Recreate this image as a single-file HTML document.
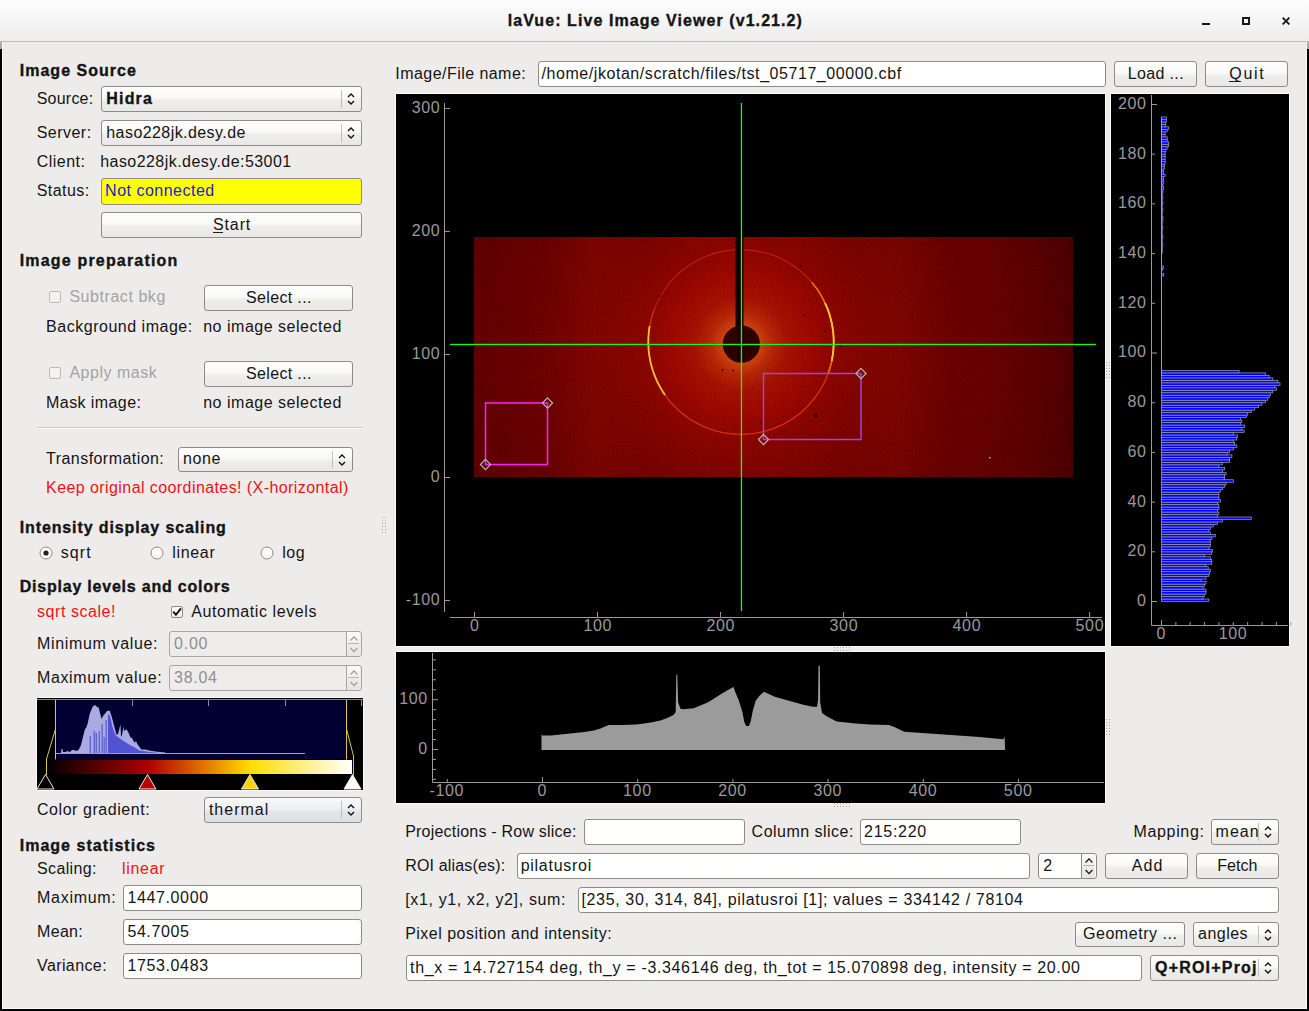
<!DOCTYPE html>
<html><head><meta charset="utf-8"><title>laVue</title>
<style>
html,body{margin:0;padding:0;}
body{width:1309px;height:1011px;position:relative;overflow:hidden;background:#edeceb;font-family:"Liberation Sans", sans-serif;}
</style></head><body>
<div style="position:absolute;left:0px;top:0px;width:1309px;height:42px;background:linear-gradient(#fdfdfd,#ececec)"></div>
<div style="position:absolute;left:0px;top:41px;width:1309px;height:1px;background:#bdbbb8"></div>
<div style="position:absolute;left:0px;top:42px;width:2px;height:969px;background:#000"></div>
<div style="position:absolute;left:0px;top:42px;width:2px;height:7px;background:#aaa8a5"></div>
<div style="position:absolute;left:1307px;top:42px;width:2px;height:969px;background:#000"></div>
<div style="position:absolute;left:1307px;top:42px;width:2px;height:7px;background:#aaa8a5"></div>
<div style="position:absolute;left:0px;top:1009px;width:1309px;height:2px;background:#000"></div>
<div style="position:absolute;left:2px;top:42px;width:1px;height:967px;background:#fdfcfb"></div>
<div style="position:absolute;left:1306px;top:42px;width:1px;height:967px;background:#fdfcfb"></div>
<div style="position:absolute;left:2px;top:1008px;width:1305px;height:1px;background:#fdfcfb"></div>
<div style="position:absolute;left:1202px;top:23px;width:8px;height:2px;background:#1a1a1a"></div>
<div style="position:absolute;left:1242px;top:17px;width:8px;height:8px;box-sizing:border-box;border:2px solid #1a1a1a"></div>
<svg style="position:absolute;left:1282px;top:17px" width="8" height="8" viewBox="0 0 8 8"><path d="M0.6 0.6 L7.4 7.4 M7.4 0.6 L0.6 7.4" stroke="#1a1a1a" stroke-width="1.9"/></svg>
<div style="position:absolute;left:101px;top:86px;width:261px;height:26px;box-sizing:border-box;border:1px solid #8f8b87;border-radius:3px;background:linear-gradient(#fefefe 0%, #f9f9f8 45%, #eeeeed 55%, #e9e8e7 100%)"></div>
<div style="position:absolute;left:341px;top:90px;width:1px;height:18px;background:#c3c0bc"></div>
<svg style="position:absolute;left:346px;top:92.0px" width="10" height="14" viewBox="0 0 10 14"><path d="M2 5.1 L5 2.1 L8 5.1 M2 8.9 L5 11.9 L8 8.9" fill="none" stroke="#111" stroke-width="1.4"/></svg>
<div style="position:absolute;left:101px;top:120px;width:261px;height:26px;box-sizing:border-box;border:1px solid #8f8b87;border-radius:3px;background:linear-gradient(#fefefe 0%, #f9f9f8 45%, #eeeeed 55%, #e9e8e7 100%)"></div>
<div style="position:absolute;left:341px;top:124px;width:1px;height:18px;background:#c3c0bc"></div>
<svg style="position:absolute;left:346px;top:126.0px" width="10" height="14" viewBox="0 0 10 14"><path d="M2 5.1 L5 2.1 L8 5.1 M2 8.9 L5 11.9 L8 8.9" fill="none" stroke="#111" stroke-width="1.4"/></svg>
<div style="position:absolute;left:101px;top:178px;width:261px;height:27px;box-sizing:border-box;border:1px solid #8f8b87;border-radius:3px;background:#ffff00"></div>
<div style="position:absolute;left:101px;top:212px;width:261px;height:26px;box-sizing:border-box;border:1px solid #8f8b87;border-radius:3px;background:linear-gradient(#fefefe 0%, #f9f9f8 45%, #eeeeed 55%, #e9e8e7 100%)"></div>
<div style="position:absolute;left:213px;top:232px;width:10px;height:1px;background:#1f1f1f"></div>
<div style="position:absolute;left:49px;top:291px;width:12px;height:12px;box-sizing:border-box;border:1px solid #bdbab6;border-radius:2px;background:#f3f2f1"></div>
<div style="position:absolute;left:204px;top:285px;width:149px;height:26px;box-sizing:border-box;border:1px solid #8f8b87;border-radius:3px;background:linear-gradient(#fefefe 0%, #f9f9f8 45%, #eeeeed 55%, #e9e8e7 100%)"></div>
<div style="position:absolute;left:49px;top:367px;width:12px;height:12px;box-sizing:border-box;border:1px solid #bdbab6;border-radius:2px;background:#f3f2f1"></div>
<div style="position:absolute;left:204px;top:361px;width:149px;height:26px;box-sizing:border-box;border:1px solid #8f8b87;border-radius:3px;background:linear-gradient(#fefefe 0%, #f9f9f8 45%, #eeeeed 55%, #e9e8e7 100%)"></div>
<div style="position:absolute;left:37px;top:427px;width:326px;height:1px;background:#cdcac6"></div>
<div style="position:absolute;left:37px;top:428px;width:326px;height:1px;background:#fbfaf9"></div>
<div style="position:absolute;left:178px;top:447px;width:175px;height:25px;box-sizing:border-box;border:1px solid #8f8b87;border-radius:3px;background:linear-gradient(#fefefe 0%, #f9f9f8 45%, #eeeeed 55%, #e9e8e7 100%)"></div>
<div style="position:absolute;left:332px;top:451px;width:1px;height:17px;background:#c3c0bc"></div>
<svg style="position:absolute;left:337px;top:452.5px" width="10" height="14" viewBox="0 0 10 14"><path d="M2 5.1 L5 2.1 L8 5.1 M2 8.9 L5 11.9 L8 8.9" fill="none" stroke="#111" stroke-width="1.4"/></svg>
<div style="position:absolute;left:382px;top:517px;width:1px;height:1px;background:#a8a5a1"></div>
<div style="position:absolute;left:382px;top:520px;width:1px;height:1px;background:#a8a5a1"></div>
<div style="position:absolute;left:382px;top:523px;width:1px;height:1px;background:#a8a5a1"></div>
<div style="position:absolute;left:382px;top:526px;width:1px;height:1px;background:#a8a5a1"></div>
<div style="position:absolute;left:382px;top:529px;width:1px;height:1px;background:#a8a5a1"></div>
<div style="position:absolute;left:382px;top:532px;width:1px;height:1px;background:#a8a5a1"></div>
<div style="position:absolute;left:385px;top:517px;width:1px;height:1px;background:#a8a5a1"></div>
<div style="position:absolute;left:385px;top:520px;width:1px;height:1px;background:#a8a5a1"></div>
<div style="position:absolute;left:385px;top:523px;width:1px;height:1px;background:#a8a5a1"></div>
<div style="position:absolute;left:385px;top:526px;width:1px;height:1px;background:#a8a5a1"></div>
<div style="position:absolute;left:385px;top:529px;width:1px;height:1px;background:#a8a5a1"></div>
<div style="position:absolute;left:385px;top:532px;width:1px;height:1px;background:#a8a5a1"></div>
<svg style="position:absolute;left:38px;top:545px" width="16" height="16" viewBox="0 0 16 16"><circle cx="8" cy="8" r="6" fill="#fdfdfd" stroke="#8f8b87" stroke-width="1"/><circle cx="8" cy="8" r="2.6" fill="#222"/></svg>
<svg style="position:absolute;left:149px;top:545px" width="16" height="16" viewBox="0 0 16 16"><circle cx="8" cy="8" r="6" fill="#fdfdfd" stroke="#8f8b87" stroke-width="1"/></svg>
<svg style="position:absolute;left:259px;top:545px" width="16" height="16" viewBox="0 0 16 16"><circle cx="8" cy="8" r="6" fill="#fdfdfd" stroke="#8f8b87" stroke-width="1"/></svg>
<div style="position:absolute;left:171px;top:606px;width:12px;height:12px;box-sizing:border-box;border:1px solid #8f8b87;border-radius:2px;background:linear-gradient(#ffffff,#f0efee)"></div>
<svg style="position:absolute;left:171px;top:606px" width="12" height="12" viewBox="0 0 12 12"><path d="M2.3 5.6 L4.9 8.8 L10 2.4" fill="none" stroke="#111" stroke-width="1.9"/></svg>
<div style="position:absolute;left:169px;top:631px;width:193px;height:26px;box-sizing:border-box;border:1px solid #a9a6a2;border-radius:3px;background:#eeedec"></div>
<div style="position:absolute;left:347px;top:632px;width:13px;height:11px;border-radius:0 2px 0 0;background:linear-gradient(#fbfbfb,#f1f0ef)"></div>
<div style="position:absolute;left:347px;top:644px;width:13px;height:12px;border-radius:0 0 2px 0;background:linear-gradient(#eeeded,#e6e5e4)"></div>
<div style="position:absolute;left:346px;top:632px;width:1px;height:24px;background:#a9a6a2"></div>
<div style="position:absolute;left:348px;top:643px;width:11px;height:1px;background:#b8b4b0"></div>
<svg style="position:absolute;left:349px;top:631px" width="10" height="26" viewBox="0 0 10 26"><path d="M1.6 9.5 L5 5.9 L8.4 9.5 M1.6 17.0 L5 20.6 L8.4 17.0" fill="none" stroke="#a19e9a" stroke-width="1.3"/></svg>
<div style="position:absolute;left:169px;top:665px;width:193px;height:26px;box-sizing:border-box;border:1px solid #a9a6a2;border-radius:3px;background:#eeedec"></div>
<div style="position:absolute;left:347px;top:666px;width:13px;height:11px;border-radius:0 2px 0 0;background:linear-gradient(#fbfbfb,#f1f0ef)"></div>
<div style="position:absolute;left:347px;top:678px;width:13px;height:12px;border-radius:0 0 2px 0;background:linear-gradient(#eeeded,#e6e5e4)"></div>
<div style="position:absolute;left:346px;top:666px;width:1px;height:24px;background:#a9a6a2"></div>
<div style="position:absolute;left:348px;top:677px;width:11px;height:1px;background:#b8b4b0"></div>
<svg style="position:absolute;left:349px;top:665px" width="10" height="26" viewBox="0 0 10 26"><path d="M1.6 9.5 L5 5.9 L8.4 9.5 M1.6 17.0 L5 20.6 L8.4 17.0" fill="none" stroke="#a19e9a" stroke-width="1.3"/></svg>
<div style="position:absolute;left:204px;top:797px;width:158px;height:26px;box-sizing:border-box;border:1px solid #8f8b87;border-radius:3px;background:linear-gradient(#f7f8fa 0%, #eef0f4 45%, #e2e5ea 55%, #dcdfe5 100%)"></div>
<div style="position:absolute;left:341px;top:801px;width:1px;height:18px;background:#c3c0bc"></div>
<svg style="position:absolute;left:346px;top:803.0px" width="10" height="14" viewBox="0 0 10 14"><path d="M2 5.1 L5 2.1 L8 5.1 M2 8.9 L5 11.9 L8 8.9" fill="none" stroke="#111" stroke-width="1.4"/></svg>
<div style="position:absolute;left:123px;top:885px;width:239px;height:26px;box-sizing:border-box;border:1px solid #8f8b87;border-radius:3px;background:#ffffff"></div>
<div style="position:absolute;left:123px;top:919px;width:239px;height:26px;box-sizing:border-box;border:1px solid #8f8b87;border-radius:3px;background:#ffffff"></div>
<div style="position:absolute;left:123px;top:953px;width:239px;height:26px;box-sizing:border-box;border:1px solid #8f8b87;border-radius:3px;background:#ffffff"></div>
<div style="position:absolute;left:538px;top:61px;width:568px;height:26px;box-sizing:border-box;border:1px solid #8f8b87;border-radius:3px;background:#ffffff"></div>
<div style="position:absolute;left:1114px;top:61px;width:83px;height:26px;box-sizing:border-box;border:1px solid #8f8b87;border-radius:3px;background:linear-gradient(#fefefe 0%, #f9f9f8 45%, #eeeeed 55%, #e9e8e7 100%)"></div>
<div style="position:absolute;left:1205px;top:61px;width:83px;height:26px;box-sizing:border-box;border:1px solid #8f8b87;border-radius:3px;background:linear-gradient(#fefefe 0%, #f9f9f8 45%, #eeeeed 55%, #e9e8e7 100%)"></div>
<div style="position:absolute;left:1229px;top:81px;width:12px;height:1px;background:#1f1f1f"></div>
<div style="position:absolute;left:584px;top:819px;width:161px;height:26px;box-sizing:border-box;border:1px solid #8f8b87;border-radius:3px;background:#ffffff"></div>
<div style="position:absolute;left:860px;top:819px;width:161px;height:26px;box-sizing:border-box;border:1px solid #8f8b87;border-radius:3px;background:#ffffff"></div>
<div style="position:absolute;left:1211px;top:819px;width:68px;height:26px;box-sizing:border-box;border:1px solid #8f8b87;border-radius:3px;background:linear-gradient(#fefefe 0%, #f9f9f8 45%, #eeeeed 55%, #e9e8e7 100%)"></div>
<div style="position:absolute;left:1258px;top:823px;width:1px;height:18px;background:#c3c0bc"></div>
<svg style="position:absolute;left:1263px;top:825.0px" width="10" height="14" viewBox="0 0 10 14"><path d="M2 5.1 L5 2.1 L8 5.1 M2 8.9 L5 11.9 L8 8.9" fill="none" stroke="#111" stroke-width="1.4"/></svg>
<div style="position:absolute;left:517px;top:853px;width:513px;height:26px;box-sizing:border-box;border:1px solid #8f8b87;border-radius:3px;background:#ffffff"></div>
<div style="position:absolute;left:1038px;top:853px;width:59px;height:26px;box-sizing:border-box;border:1px solid #8f8b87;border-radius:3px;background:#ffffff"></div>
<div style="position:absolute;left:1082px;top:854px;width:13px;height:11px;border-radius:0 2px 0 0;background:linear-gradient(#fbfbfb,#f1f0ef)"></div>
<div style="position:absolute;left:1082px;top:866px;width:13px;height:12px;border-radius:0 0 2px 0;background:linear-gradient(#eeeded,#e6e5e4)"></div>
<div style="position:absolute;left:1081px;top:854px;width:1px;height:24px;background:#8f8b87"></div>
<div style="position:absolute;left:1083px;top:865px;width:11px;height:1px;background:#b8b4b0"></div>
<svg style="position:absolute;left:1084px;top:853px" width="10" height="26" viewBox="0 0 10 26"><path d="M1.6 9.5 L5 5.9 L8.4 9.5 M1.6 17.0 L5 20.6 L8.4 17.0" fill="none" stroke="#111" stroke-width="1.3"/></svg>
<div style="position:absolute;left:1105px;top:853px;width:83px;height:26px;box-sizing:border-box;border:1px solid #8f8b87;border-radius:3px;background:linear-gradient(#fefefe 0%, #f9f9f8 45%, #eeeeed 55%, #e9e8e7 100%)"></div>
<div style="position:absolute;left:1196px;top:853px;width:83px;height:26px;box-sizing:border-box;border:1px solid #8f8b87;border-radius:3px;background:linear-gradient(#fefefe 0%, #f9f9f8 45%, #eeeeed 55%, #e9e8e7 100%)"></div>
<div style="position:absolute;left:578px;top:887px;width:701px;height:26px;box-sizing:border-box;border:1px solid #8f8b87;border-radius:3px;background:#ffffff"></div>
<div style="position:absolute;left:1075px;top:922px;width:110px;height:25px;box-sizing:border-box;border:1px solid #8f8b87;border-radius:3px;background:linear-gradient(#fefefe 0%, #f9f9f8 45%, #eeeeed 55%, #e9e8e7 100%)"></div>
<div style="position:absolute;left:1193px;top:922px;width:86px;height:25px;box-sizing:border-box;border:1px solid #8f8b87;border-radius:3px;background:linear-gradient(#fefefe 0%, #f9f9f8 45%, #eeeeed 55%, #e9e8e7 100%)"></div>
<div style="position:absolute;left:1258px;top:926px;width:1px;height:17px;background:#c3c0bc"></div>
<svg style="position:absolute;left:1263px;top:927.5px" width="10" height="14" viewBox="0 0 10 14"><path d="M2 5.1 L5 2.1 L8 5.1 M2 8.9 L5 11.9 L8 8.9" fill="none" stroke="#111" stroke-width="1.4"/></svg>
<div style="position:absolute;left:406px;top:955px;width:736px;height:26px;box-sizing:border-box;border:1px solid #8f8b87;border-radius:3px;background:#ffffff"></div>
<div style="position:absolute;left:1150px;top:955px;width:129px;height:26px;box-sizing:border-box;border:1px solid #8f8b87;border-radius:3px;background:linear-gradient(#fefefe 0%, #f9f9f8 45%, #eeeeed 55%, #e9e8e7 100%)"></div>
<div style="position:absolute;left:1258px;top:959px;width:1px;height:18px;background:#c3c0bc"></div>
<svg style="position:absolute;left:1263px;top:961.0px" width="10" height="14" viewBox="0 0 10 14"><path d="M2 5.1 L5 2.1 L8 5.1 M2 8.9 L5 11.9 L8 8.9" fill="none" stroke="#111" stroke-width="1.4"/></svg>
<div style="position:absolute;left:395px;top:93px;width:711px;height:554px;background:#fcfbfa"></div>
<div style="position:absolute;left:396px;top:94px;width:709px;height:552px;background:#000"></div>
<div style="position:absolute;left:1110px;top:93px;width:180px;height:554px;background:#fcfbfa"></div>
<div style="position:absolute;left:1111px;top:94px;width:178px;height:552px;background:#000"></div>
<div style="position:absolute;left:395px;top:651px;width:711px;height:153px;background:#fcfbfa"></div>
<div style="position:absolute;left:396px;top:652px;width:709px;height:151px;background:#000"></div>
<svg style="position:absolute;left:0;top:0" width="1309" height="1011" viewBox="0 0 1309 1011" font-family="Liberation Sans, sans-serif"><defs><radialGradient id="glow" gradientUnits="userSpaceOnUse" cx="741" cy="344" r="360"><stop offset="0" stop-color="#dc4c14"/><stop offset="0.055" stop-color="#d04210"/><stop offset="0.085" stop-color="#bc2808"/><stop offset="0.13" stop-color="#aa1202"/><stop offset="0.2" stop-color="#a00800"/><stop offset="0.26" stop-color="#900600"/><stop offset="0.4" stop-color="#7c0400"/><stop offset="0.6" stop-color="#6c0200"/><stop offset="0.8" stop-color="#600000"/><stop offset="1" stop-color="#560000"/></radialGradient><linearGradient id="bands" gradientUnits="userSpaceOnUse" x1="474" x2="1073" y1="0" y2="0"><stop offset="0" stop-color="#ff2000" stop-opacity="0"/><stop offset="0.12" stop-color="#ff2000" stop-opacity="0"/><stop offset="0.2" stop-color="#ff2000" stop-opacity="0.07"/><stop offset="0.28" stop-color="#ff2000" stop-opacity="0"/><stop offset="0.62" stop-color="#ff2000" stop-opacity="0"/><stop offset="0.71" stop-color="#ff2000" stop-opacity="0.06"/><stop offset="0.8" stop-color="#ff2000" stop-opacity="0"/><stop offset="1" stop-color="#000" stop-opacity="0.12"/></linearGradient><linearGradient id="arm" x1="0" x2="1" y1="0" y2="0"><stop offset="0" stop-color="#2a0300"/><stop offset="0.4" stop-color="#080000"/><stop offset="1" stop-color="#1a0100"/></linearGradient><filter id="noise" x="0" y="0" width="100%" height="100%"><feTurbulence type="fractalNoise" baseFrequency="0.9" numOctaves="1" seed="4" result="t"/><feColorMatrix in="t" type="matrix" values="0 0 0 0 0  0 0 0 0 0  0 0 0 0 0  0 0 0 -2.2 1.25"/></filter></defs><rect x="474" y="237" width="599" height="240" fill="url(#glow)"/><rect x="474" y="237" width="599" height="240" fill="url(#bands)"/><rect x="474" y="237" width="599" height="240" filter="url(#noise)" opacity="0.22"/><ellipse cx="741.0" cy="342.0" rx="92.7" ry="92.4" fill="none" stroke="#c42004" stroke-width="1.1"/><polyline points="828.1,373.6 825.4,380.3 822.1,386.8 818.3,393.0 814.0,398.9 809.3,404.4 804.2,409.6 798.7,414.3 792.8,418.6 786.6,422.4 780.2,425.7 773.5,428.5 766.6,430.8 759.5,432.5 752.3,433.7 745.0,434.3 737.8,434.3 730.5,433.8 723.3,432.7 716.2,431.0 709.3,428.8 702.6,426.1 696.1,422.8 689.8,419.1 683.9,414.8 678.4,410.1 673.2,405.0 668.5,399.5 664.1,393.7 660.3,387.5 657.0,381.0 654.2,374.4 651.9,367.5 650.2,360.4 649.0,353.3 648.4,346.0 648.4,338.8 648.9,331.5 650.0,324.4 651.7,317.3 653.9,310.4" fill="none" stroke="#d83008" stroke-width="1.1"/><polyline points="665.1,395.0 664.0,393.5 663.0,392.0 662.1,390.5 661.1,388.9 660.2,387.3 659.3,385.7 658.5,384.1 657.7,382.5 656.9,380.9 656.2,379.2 655.4,377.5 654.8,375.9 654.1,374.2 653.5,372.5 652.9,370.7 652.4,369.0 651.8,367.3 651.4,365.5 650.9,363.8 650.5,362.0 650.1,360.2 649.8,358.4 649.5,356.7 649.2,354.9 649.0,353.1 648.8,351.3 648.6,349.5 648.5,347.6 648.4,345.8 648.3,344.0 648.3,342.2 648.3,340.4 648.4,338.6 648.4,336.8 648.6,335.0 648.7,333.1 648.9,331.3 649.1,329.5 649.4,327.7 649.7,326.0" fill="none" stroke="#ffc030" stroke-width="1.8"/><polyline points="812.0,282.6 813.5,284.5 815.0,286.4 816.5,288.3 817.9,290.3 819.2,292.4 820.5,294.4 821.7,296.5 822.8,298.6 824.0,300.8 825.0,303.0 826.0,305.2 826.9,307.4 827.8,309.6 828.6,311.9 829.4,314.2 830.1,316.5 830.7,318.9 831.3,321.2 831.8,323.6 832.3,326.0 832.7,328.3 833.0,330.7 833.3,333.1 833.5,335.6 833.6,338.0 833.7,340.4 833.7,342.8 833.6,345.2 833.5,347.6 833.3,350.1 833.1,352.5 832.8,354.9 832.4,357.3 832.0,359.6 831.5,362.0 830.9,364.4 830.3,366.7 829.6,369.0 828.9,371.3 828.1,373.6" fill="none" stroke="#f07010" stroke-width="1.6"/><polyline points="825.0,303.0 825.6,304.3 826.2,305.7 826.8,307.1 827.4,308.4 827.9,309.8 828.4,311.2 828.9,312.6 829.4,314.1 829.8,315.5 830.2,316.9 830.6,318.4 831.0,319.8 831.3,321.3 831.7,322.7 832.0,324.2 832.2,325.6 832.5,327.1 832.7,328.6 832.9,330.1 833.1,331.5 833.3,333.0 833.4,334.5 833.5,336.0 833.6,337.5 833.7,339.0 833.7,340.5 833.7,342.0 833.7,343.5 833.7,344.9 833.6,346.4 833.5,347.9 833.4,349.4 833.3,350.9 833.1,352.4 832.9,353.9 832.7,355.3 832.5,356.8 832.2,358.3 832.0,359.7 831.7,361.2" fill="none" stroke="#ffc838" stroke-width="1.8"/><rect x="799.5" y="265.0" width="2" height="2" fill="#100000"/><rect x="802.85" y="314.25" width="1.5" height="1.5" fill="#100000"/><rect x="824.65" y="330.75" width="1.5" height="1.5" fill="#100000"/><rect x="839.65" y="345.25" width="1.5" height="1.5" fill="#100000"/><rect x="721.75" y="369.25" width="1.5" height="1.5" fill="#100000"/><rect x="732.55" y="369.85" width="1.5" height="1.5" fill="#100000"/><rect x="814.2" y="414.2" width="3" height="3" fill="#100000"/><rect x="760.65" y="421.75" width="1.5" height="1.5" fill="#100000"/><rect x="658.75" y="295.25" width="1.5" height="1.5" fill="#100000"/><rect x="987.25" y="456.25" width="1.5" height="1.5" fill="#100000"/><rect x="989" y="457" width="1.5" height="1.5" fill="#ffa020"/><rect x="735.5" y="237" width="8" height="100" fill="url(#arm)"/><circle cx="741.4" cy="344.2" r="18.6" fill="#2c0100"/><rect x="737" y="326" width="7" height="36" fill="#180000" opacity="0.6"/><rect x="740.8" y="103" width="1.3" height="508" fill="#12ff12"/><rect x="450" y="343.8" width="646" height="1.3" fill="#12ff12"/><rect x="485.5" y="403" width="62" height="61.5" fill="none" stroke="#ff20ff" stroke-width="1.5"/><rect x="763.5" y="373.5" width="97.5" height="66" fill="none" stroke="#9848d8" stroke-width="1.5"/><path d="M485.5 459.4 L490.6 464.5 L485.5 469.6 L480.4 464.5 Z" fill="none" stroke="#b0c0b8" stroke-width="1.1"/><path d="M547.5 397.9 L552.6 403 L547.5 408.1 L542.4 403 Z" fill="none" stroke="#b0c0b8" stroke-width="1.1"/><path d="M763.5 434.4 L768.6 439.5 L763.5 444.6 L758.4 439.5 Z" fill="none" stroke="#b0c0b8" stroke-width="1.1"/><path d="M861 368.4 L866.1 373.5 L861 378.6 L855.9 373.5 Z" fill="none" stroke="#b0c0b8" stroke-width="1.1"/><line x1="444.5" y1="103" x2="444.5" y2="612" stroke="#9a9a9a" stroke-width="1"/><line x1="444.5" y1="108.41000000000003" x2="450" y2="108.41000000000003" stroke="#9a9a9a" stroke-width="1"/><text x="440.34999999999997" y="112.81000000000003" text-anchor="end" font-size="16" fill="#9a9a9a" letter-spacing="0.65">300</text><line x1="444.5" y1="231.44" x2="450" y2="231.44" stroke="#9a9a9a" stroke-width="1"/><text x="440.34999999999997" y="235.84" text-anchor="end" font-size="16" fill="#9a9a9a" letter-spacing="0.65">200</text><line x1="444.5" y1="354.47" x2="450" y2="354.47" stroke="#9a9a9a" stroke-width="1"/><text x="440.34999999999997" y="358.87" text-anchor="end" font-size="16" fill="#9a9a9a" letter-spacing="0.65">100</text><line x1="444.5" y1="477.5" x2="450" y2="477.5" stroke="#9a9a9a" stroke-width="1"/><text x="440.34999999999997" y="481.9" text-anchor="end" font-size="16" fill="#9a9a9a" letter-spacing="0.65">0</text><line x1="444.5" y1="600.53" x2="450" y2="600.53" stroke="#9a9a9a" stroke-width="1"/><text x="440.34999999999997" y="604.93" text-anchor="end" font-size="16" fill="#9a9a9a" letter-spacing="0.65">-100</text><line x1="450" y1="617.5" x2="1102" y2="617.5" stroke="#9a9a9a" stroke-width="1"/><line x1="474.5" y1="612" x2="474.5" y2="617.5" stroke="#9a9a9a" stroke-width="1"/><text x="474.8" y="631" text-anchor="middle" font-size="16" fill="#9a9a9a" letter-spacing="0.65">0</text><line x1="597.52" y1="612" x2="597.52" y2="617.5" stroke="#9a9a9a" stroke-width="1"/><text x="597.8199999999999" y="631" text-anchor="middle" font-size="16" fill="#9a9a9a" letter-spacing="0.65">100</text><line x1="720.54" y1="612" x2="720.54" y2="617.5" stroke="#9a9a9a" stroke-width="1"/><text x="720.8399999999999" y="631" text-anchor="middle" font-size="16" fill="#9a9a9a" letter-spacing="0.65">200</text><line x1="843.56" y1="612" x2="843.56" y2="617.5" stroke="#9a9a9a" stroke-width="1"/><text x="843.8599999999999" y="631" text-anchor="middle" font-size="16" fill="#9a9a9a" letter-spacing="0.65">300</text><line x1="966.5799999999999" y1="612" x2="966.5799999999999" y2="617.5" stroke="#9a9a9a" stroke-width="1"/><text x="966.8799999999999" y="631" text-anchor="middle" font-size="16" fill="#9a9a9a" letter-spacing="0.65">400</text><line x1="1089.6" y1="612" x2="1089.6" y2="617.5" stroke="#9a9a9a" stroke-width="1"/><text x="1089.8999999999999" y="631" text-anchor="middle" font-size="16" fill="#9a9a9a" letter-spacing="0.65">500</text><rect x="1161.5" y="599.01" width="47.4" height="2.485" fill="#0000ff" stroke="#a0a0a0" stroke-width="0.7"/><rect x="1161.5" y="596.53" width="41.6" height="2.485" fill="#0000ff" stroke="#a0a0a0" stroke-width="0.7"/><rect x="1161.5" y="594.04" width="43.1" height="2.485" fill="#0000ff" stroke="#a0a0a0" stroke-width="0.7"/><rect x="1161.5" y="591.56" width="44.5" height="2.485" fill="#0000ff" stroke="#a0a0a0" stroke-width="0.7"/><rect x="1161.5" y="589.08" width="44.5" height="2.485" fill="#0000ff" stroke="#a0a0a0" stroke-width="0.7"/><rect x="1161.5" y="586.59" width="41.6" height="2.485" fill="#0000ff" stroke="#a0a0a0" stroke-width="0.7"/><rect x="1161.5" y="584.11" width="43.1" height="2.485" fill="#0000ff" stroke="#a0a0a0" stroke-width="0.7"/><rect x="1161.5" y="581.62" width="44.5" height="2.485" fill="#0000ff" stroke="#a0a0a0" stroke-width="0.7"/><rect x="1161.5" y="579.13" width="39.5" height="2.485" fill="#0000ff" stroke="#a0a0a0" stroke-width="0.7"/><rect x="1161.5" y="576.65" width="44.5" height="2.485" fill="#0000ff" stroke="#a0a0a0" stroke-width="0.7"/><rect x="1161.5" y="574.16" width="47.4" height="2.485" fill="#0000ff" stroke="#a0a0a0" stroke-width="0.7"/><rect x="1161.5" y="571.68" width="48.1" height="2.485" fill="#0000ff" stroke="#a0a0a0" stroke-width="0.7"/><rect x="1161.5" y="569.20" width="48.8" height="2.485" fill="#0000ff" stroke="#a0a0a0" stroke-width="0.7"/><rect x="1161.5" y="566.71" width="46.7" height="2.485" fill="#0000ff" stroke="#a0a0a0" stroke-width="0.7"/><rect x="1161.5" y="564.23" width="44.5" height="2.485" fill="#0000ff" stroke="#a0a0a0" stroke-width="0.7"/><rect x="1161.5" y="561.74" width="50.3" height="2.485" fill="#0000ff" stroke="#a0a0a0" stroke-width="0.7"/><rect x="1161.5" y="559.25" width="50.3" height="2.485" fill="#0000ff" stroke="#a0a0a0" stroke-width="0.7"/><rect x="1161.5" y="556.77" width="48.8" height="2.485" fill="#0000ff" stroke="#a0a0a0" stroke-width="0.7"/><rect x="1161.5" y="554.28" width="43.1" height="2.485" fill="#0000ff" stroke="#a0a0a0" stroke-width="0.7"/><rect x="1161.5" y="551.80" width="50.3" height="2.485" fill="#0000ff" stroke="#a0a0a0" stroke-width="0.7"/><rect x="1161.5" y="549.32" width="51.0" height="2.485" fill="#0000ff" stroke="#a0a0a0" stroke-width="0.7"/><rect x="1161.5" y="546.83" width="47.4" height="2.485" fill="#0000ff" stroke="#a0a0a0" stroke-width="0.7"/><rect x="1161.5" y="544.35" width="48.8" height="2.485" fill="#0000ff" stroke="#a0a0a0" stroke-width="0.7"/><rect x="1161.5" y="541.86" width="48.8" height="2.485" fill="#0000ff" stroke="#a0a0a0" stroke-width="0.7"/><rect x="1161.5" y="539.38" width="48.8" height="2.485" fill="#0000ff" stroke="#a0a0a0" stroke-width="0.7"/><rect x="1161.5" y="536.89" width="50.3" height="2.485" fill="#0000ff" stroke="#a0a0a0" stroke-width="0.7"/><rect x="1161.5" y="534.40" width="53.8" height="2.485" fill="#0000ff" stroke="#a0a0a0" stroke-width="0.7"/><rect x="1161.5" y="531.92" width="48.8" height="2.485" fill="#0000ff" stroke="#a0a0a0" stroke-width="0.7"/><rect x="1161.5" y="529.43" width="47.4" height="2.485" fill="#0000ff" stroke="#a0a0a0" stroke-width="0.7"/><rect x="1161.5" y="526.95" width="48.8" height="2.485" fill="#0000ff" stroke="#a0a0a0" stroke-width="0.7"/><rect x="1161.5" y="524.47" width="51.7" height="2.485" fill="#0000ff" stroke="#a0a0a0" stroke-width="0.7"/><rect x="1161.5" y="521.98" width="56.0" height="2.485" fill="#0000ff" stroke="#a0a0a0" stroke-width="0.7"/><rect x="1161.5" y="519.50" width="61.0" height="2.485" fill="#0000ff" stroke="#a0a0a0" stroke-width="0.7"/><rect x="1161.5" y="517.01" width="89.8" height="2.485" fill="#0000ff" stroke="#a0a0a0" stroke-width="0.7"/><rect x="1161.5" y="514.52" width="56.0" height="2.485" fill="#0000ff" stroke="#a0a0a0" stroke-width="0.7"/><rect x="1161.5" y="512.04" width="57.4" height="2.485" fill="#0000ff" stroke="#a0a0a0" stroke-width="0.7"/><rect x="1161.5" y="509.56" width="56.0" height="2.485" fill="#0000ff" stroke="#a0a0a0" stroke-width="0.7"/><rect x="1161.5" y="507.07" width="57.4" height="2.485" fill="#0000ff" stroke="#a0a0a0" stroke-width="0.7"/><rect x="1161.5" y="504.59" width="57.4" height="2.485" fill="#0000ff" stroke="#a0a0a0" stroke-width="0.7"/><rect x="1161.5" y="502.10" width="56.0" height="2.485" fill="#0000ff" stroke="#a0a0a0" stroke-width="0.7"/><rect x="1161.5" y="499.62" width="58.9" height="2.485" fill="#0000ff" stroke="#a0a0a0" stroke-width="0.7"/><rect x="1161.5" y="497.13" width="57.4" height="2.485" fill="#0000ff" stroke="#a0a0a0" stroke-width="0.7"/><rect x="1161.5" y="494.64" width="57.4" height="2.485" fill="#0000ff" stroke="#a0a0a0" stroke-width="0.7"/><rect x="1161.5" y="492.16" width="57.4" height="2.485" fill="#0000ff" stroke="#a0a0a0" stroke-width="0.7"/><rect x="1161.5" y="489.68" width="58.9" height="2.485" fill="#0000ff" stroke="#a0a0a0" stroke-width="0.7"/><rect x="1161.5" y="487.19" width="61.0" height="2.485" fill="#0000ff" stroke="#a0a0a0" stroke-width="0.7"/><rect x="1161.5" y="484.71" width="63.2" height="2.485" fill="#0000ff" stroke="#a0a0a0" stroke-width="0.7"/><rect x="1161.5" y="482.22" width="64.6" height="2.485" fill="#0000ff" stroke="#a0a0a0" stroke-width="0.7"/><rect x="1161.5" y="479.74" width="71.8" height="2.485" fill="#0000ff" stroke="#a0a0a0" stroke-width="0.7"/><rect x="1161.5" y="477.25" width="63.2" height="2.485" fill="#0000ff" stroke="#a0a0a0" stroke-width="0.7"/><rect x="1161.5" y="474.76" width="63.2" height="2.485" fill="#0000ff" stroke="#a0a0a0" stroke-width="0.7"/><rect x="1161.5" y="472.28" width="64.6" height="2.485" fill="#0000ff" stroke="#a0a0a0" stroke-width="0.7"/><rect x="1161.5" y="469.80" width="61.0" height="2.485" fill="#0000ff" stroke="#a0a0a0" stroke-width="0.7"/><rect x="1161.5" y="467.31" width="63.2" height="2.485" fill="#0000ff" stroke="#a0a0a0" stroke-width="0.7"/><rect x="1161.5" y="464.83" width="57.4" height="2.485" fill="#0000ff" stroke="#a0a0a0" stroke-width="0.7"/><rect x="1161.5" y="462.34" width="61.0" height="2.485" fill="#0000ff" stroke="#a0a0a0" stroke-width="0.7"/><rect x="1161.5" y="459.86" width="68.2" height="2.485" fill="#0000ff" stroke="#a0a0a0" stroke-width="0.7"/><rect x="1161.5" y="457.37" width="68.2" height="2.485" fill="#0000ff" stroke="#a0a0a0" stroke-width="0.7"/><rect x="1161.5" y="454.88" width="70.4" height="2.485" fill="#0000ff" stroke="#a0a0a0" stroke-width="0.7"/><rect x="1161.5" y="452.40" width="66.1" height="2.485" fill="#0000ff" stroke="#a0a0a0" stroke-width="0.7"/><rect x="1161.5" y="449.92" width="68.2" height="2.485" fill="#0000ff" stroke="#a0a0a0" stroke-width="0.7"/><rect x="1161.5" y="447.43" width="71.8" height="2.485" fill="#0000ff" stroke="#a0a0a0" stroke-width="0.7"/><rect x="1161.5" y="444.95" width="75.4" height="2.485" fill="#0000ff" stroke="#a0a0a0" stroke-width="0.7"/><rect x="1161.5" y="442.46" width="73.2" height="2.485" fill="#0000ff" stroke="#a0a0a0" stroke-width="0.7"/><rect x="1161.5" y="439.98" width="71.8" height="2.485" fill="#0000ff" stroke="#a0a0a0" stroke-width="0.7"/><rect x="1161.5" y="437.49" width="75.4" height="2.485" fill="#0000ff" stroke="#a0a0a0" stroke-width="0.7"/><rect x="1161.5" y="435.00" width="76.1" height="2.485" fill="#0000ff" stroke="#a0a0a0" stroke-width="0.7"/><rect x="1161.5" y="432.52" width="71.8" height="2.485" fill="#0000ff" stroke="#a0a0a0" stroke-width="0.7"/><rect x="1161.5" y="430.03" width="82.6" height="2.485" fill="#0000ff" stroke="#a0a0a0" stroke-width="0.7"/><rect x="1161.5" y="427.55" width="80.4" height="2.485" fill="#0000ff" stroke="#a0a0a0" stroke-width="0.7"/><rect x="1161.5" y="425.06" width="83.3" height="2.485" fill="#0000ff" stroke="#a0a0a0" stroke-width="0.7"/><rect x="1161.5" y="422.58" width="79.0" height="2.485" fill="#0000ff" stroke="#a0a0a0" stroke-width="0.7"/><rect x="1161.5" y="420.10" width="80.4" height="2.485" fill="#0000ff" stroke="#a0a0a0" stroke-width="0.7"/><rect x="1161.5" y="417.61" width="79.0" height="2.485" fill="#0000ff" stroke="#a0a0a0" stroke-width="0.7"/><rect x="1161.5" y="415.12" width="84.7" height="2.485" fill="#0000ff" stroke="#a0a0a0" stroke-width="0.7"/><rect x="1161.5" y="412.64" width="86.2" height="2.485" fill="#0000ff" stroke="#a0a0a0" stroke-width="0.7"/><rect x="1161.5" y="410.15" width="89.8" height="2.485" fill="#0000ff" stroke="#a0a0a0" stroke-width="0.7"/><rect x="1161.5" y="407.67" width="93.3" height="2.485" fill="#0000ff" stroke="#a0a0a0" stroke-width="0.7"/><rect x="1161.5" y="405.19" width="96.9" height="2.485" fill="#0000ff" stroke="#a0a0a0" stroke-width="0.7"/><rect x="1161.5" y="402.70" width="100.5" height="2.485" fill="#0000ff" stroke="#a0a0a0" stroke-width="0.7"/><rect x="1161.5" y="400.22" width="104.1" height="2.485" fill="#0000ff" stroke="#a0a0a0" stroke-width="0.7"/><rect x="1161.5" y="397.73" width="106.3" height="2.485" fill="#0000ff" stroke="#a0a0a0" stroke-width="0.7"/><rect x="1161.5" y="395.25" width="107.7" height="2.485" fill="#0000ff" stroke="#a0a0a0" stroke-width="0.7"/><rect x="1161.5" y="392.76" width="109.1" height="2.485" fill="#0000ff" stroke="#a0a0a0" stroke-width="0.7"/><rect x="1161.5" y="390.27" width="111.3" height="2.485" fill="#0000ff" stroke="#a0a0a0" stroke-width="0.7"/><rect x="1161.5" y="387.79" width="114.9" height="2.485" fill="#0000ff" stroke="#a0a0a0" stroke-width="0.7"/><rect x="1161.5" y="385.31" width="113.4" height="2.485" fill="#0000ff" stroke="#a0a0a0" stroke-width="0.7"/><rect x="1161.5" y="382.82" width="118.5" height="2.485" fill="#0000ff" stroke="#a0a0a0" stroke-width="0.7"/><rect x="1161.5" y="380.34" width="116.3" height="2.485" fill="#0000ff" stroke="#a0a0a0" stroke-width="0.7"/><rect x="1161.5" y="377.85" width="111.3" height="2.485" fill="#0000ff" stroke="#a0a0a0" stroke-width="0.7"/><rect x="1161.5" y="375.37" width="107.7" height="2.485" fill="#0000ff" stroke="#a0a0a0" stroke-width="0.7"/><rect x="1161.5" y="372.88" width="104.1" height="2.485" fill="#0000ff" stroke="#a0a0a0" stroke-width="0.7"/><rect x="1161.5" y="370.39" width="77.5" height="2.485" fill="#0000ff" stroke="#a0a0a0" stroke-width="0.7"/><rect x="1161.5" y="273.48" width="2.2" height="2.485" fill="#0000ff" stroke="#a0a0a0" stroke-width="0.7"/><rect x="1161.5" y="268.51" width="0.7" height="2.485" fill="#0000ff" stroke="#a0a0a0" stroke-width="0.7"/><rect x="1161.5" y="266.03" width="2.2" height="2.485" fill="#0000ff" stroke="#a0a0a0" stroke-width="0.7"/><rect x="1161.5" y="251.12" width="0.7" height="2.485" fill="#0000ff" stroke="#a0a0a0" stroke-width="0.7"/><rect x="1161.5" y="248.63" width="0.7" height="2.485" fill="#0000ff" stroke="#a0a0a0" stroke-width="0.7"/><rect x="1161.5" y="246.15" width="0.7" height="2.485" fill="#0000ff" stroke="#a0a0a0" stroke-width="0.7"/><rect x="1161.5" y="243.66" width="1.4" height="2.485" fill="#0000ff" stroke="#a0a0a0" stroke-width="0.7"/><rect x="1161.5" y="241.18" width="0.7" height="2.485" fill="#0000ff" stroke="#a0a0a0" stroke-width="0.7"/><rect x="1161.5" y="238.69" width="0.7" height="2.485" fill="#0000ff" stroke="#a0a0a0" stroke-width="0.7"/><rect x="1161.5" y="236.21" width="1.4" height="2.485" fill="#0000ff" stroke="#a0a0a0" stroke-width="0.7"/><rect x="1161.5" y="233.72" width="0.7" height="2.485" fill="#0000ff" stroke="#a0a0a0" stroke-width="0.7"/><rect x="1161.5" y="231.24" width="0.7" height="2.485" fill="#0000ff" stroke="#a0a0a0" stroke-width="0.7"/><rect x="1161.5" y="228.75" width="0.7" height="2.485" fill="#0000ff" stroke="#a0a0a0" stroke-width="0.7"/><rect x="1161.5" y="226.27" width="1.4" height="2.485" fill="#0000ff" stroke="#a0a0a0" stroke-width="0.7"/><rect x="1161.5" y="223.78" width="0.7" height="2.485" fill="#0000ff" stroke="#a0a0a0" stroke-width="0.7"/><rect x="1161.5" y="221.30" width="0.7" height="2.485" fill="#0000ff" stroke="#a0a0a0" stroke-width="0.7"/><rect x="1161.5" y="218.81" width="1.4" height="2.485" fill="#0000ff" stroke="#a0a0a0" stroke-width="0.7"/><rect x="1161.5" y="216.33" width="1.4" height="2.485" fill="#0000ff" stroke="#a0a0a0" stroke-width="0.7"/><rect x="1161.5" y="213.84" width="0.7" height="2.485" fill="#0000ff" stroke="#a0a0a0" stroke-width="0.7"/><rect x="1161.5" y="211.36" width="0.7" height="2.485" fill="#0000ff" stroke="#a0a0a0" stroke-width="0.7"/><rect x="1161.5" y="208.87" width="1.4" height="2.485" fill="#0000ff" stroke="#a0a0a0" stroke-width="0.7"/><rect x="1161.5" y="206.39" width="0.7" height="2.485" fill="#0000ff" stroke="#a0a0a0" stroke-width="0.7"/><rect x="1161.5" y="203.90" width="0.7" height="2.485" fill="#0000ff" stroke="#a0a0a0" stroke-width="0.7"/><rect x="1161.5" y="201.42" width="1.4" height="2.485" fill="#0000ff" stroke="#a0a0a0" stroke-width="0.7"/><rect x="1161.5" y="198.93" width="0.7" height="2.485" fill="#0000ff" stroke="#a0a0a0" stroke-width="0.7"/><rect x="1161.5" y="196.44" width="1.4" height="2.485" fill="#0000ff" stroke="#a0a0a0" stroke-width="0.7"/><rect x="1161.5" y="193.96" width="0.7" height="2.485" fill="#0000ff" stroke="#a0a0a0" stroke-width="0.7"/><rect x="1161.5" y="191.48" width="1.4" height="2.485" fill="#0000ff" stroke="#a0a0a0" stroke-width="0.7"/><rect x="1161.5" y="188.99" width="1.4" height="2.485" fill="#0000ff" stroke="#a0a0a0" stroke-width="0.7"/><rect x="1161.5" y="186.50" width="2.2" height="2.485" fill="#0000ff" stroke="#a0a0a0" stroke-width="0.7"/><rect x="1161.5" y="184.02" width="1.4" height="2.485" fill="#0000ff" stroke="#a0a0a0" stroke-width="0.7"/><rect x="1161.5" y="181.54" width="2.2" height="2.485" fill="#0000ff" stroke="#a0a0a0" stroke-width="0.7"/><rect x="1161.5" y="179.05" width="2.2" height="2.485" fill="#0000ff" stroke="#a0a0a0" stroke-width="0.7"/><rect x="1161.5" y="176.56" width="2.2" height="2.485" fill="#0000ff" stroke="#a0a0a0" stroke-width="0.7"/><rect x="1161.5" y="174.08" width="3.6" height="2.485" fill="#0000ff" stroke="#a0a0a0" stroke-width="0.7"/><rect x="1161.5" y="171.60" width="2.2" height="2.485" fill="#0000ff" stroke="#a0a0a0" stroke-width="0.7"/><rect x="1161.5" y="169.11" width="2.2" height="2.485" fill="#0000ff" stroke="#a0a0a0" stroke-width="0.7"/><rect x="1161.5" y="166.62" width="2.9" height="2.485" fill="#0000ff" stroke="#a0a0a0" stroke-width="0.7"/><rect x="1161.5" y="164.14" width="2.9" height="2.485" fill="#0000ff" stroke="#a0a0a0" stroke-width="0.7"/><rect x="1161.5" y="161.66" width="3.6" height="2.485" fill="#0000ff" stroke="#a0a0a0" stroke-width="0.7"/><rect x="1161.5" y="159.17" width="3.6" height="2.485" fill="#0000ff" stroke="#a0a0a0" stroke-width="0.7"/><rect x="1161.5" y="156.69" width="3.6" height="2.485" fill="#0000ff" stroke="#a0a0a0" stroke-width="0.7"/><rect x="1161.5" y="154.20" width="3.6" height="2.485" fill="#0000ff" stroke="#a0a0a0" stroke-width="0.7"/><rect x="1161.5" y="151.72" width="3.6" height="2.485" fill="#0000ff" stroke="#a0a0a0" stroke-width="0.7"/><rect x="1161.5" y="149.23" width="4.3" height="2.485" fill="#0000ff" stroke="#a0a0a0" stroke-width="0.7"/><rect x="1161.5" y="146.75" width="5.7" height="2.485" fill="#0000ff" stroke="#a0a0a0" stroke-width="0.7"/><rect x="1161.5" y="144.26" width="7.2" height="2.485" fill="#0000ff" stroke="#a0a0a0" stroke-width="0.7"/><rect x="1161.5" y="141.78" width="7.2" height="2.485" fill="#0000ff" stroke="#a0a0a0" stroke-width="0.7"/><rect x="1161.5" y="139.29" width="5.7" height="2.485" fill="#0000ff" stroke="#a0a0a0" stroke-width="0.7"/><rect x="1161.5" y="136.81" width="5.7" height="2.485" fill="#0000ff" stroke="#a0a0a0" stroke-width="0.7"/><rect x="1161.5" y="134.32" width="3.6" height="2.485" fill="#0000ff" stroke="#a0a0a0" stroke-width="0.7"/><rect x="1161.5" y="131.84" width="3.6" height="2.485" fill="#0000ff" stroke="#a0a0a0" stroke-width="0.7"/><rect x="1161.5" y="129.35" width="5.7" height="2.485" fill="#0000ff" stroke="#a0a0a0" stroke-width="0.7"/><rect x="1161.5" y="126.87" width="7.2" height="2.485" fill="#0000ff" stroke="#a0a0a0" stroke-width="0.7"/><rect x="1161.5" y="124.38" width="4.3" height="2.485" fill="#0000ff" stroke="#a0a0a0" stroke-width="0.7"/><rect x="1161.5" y="121.90" width="4.3" height="2.485" fill="#0000ff" stroke="#a0a0a0" stroke-width="0.7"/><rect x="1161.5" y="119.41" width="5.0" height="2.485" fill="#0000ff" stroke="#a0a0a0" stroke-width="0.7"/><rect x="1161.5" y="116.93" width="5.0" height="2.485" fill="#0000ff" stroke="#a0a0a0" stroke-width="0.7"/><line x1="1161.5" y1="375.365" x2="1161.5" y2="116.92500000000001" stroke="#a0a0a0" stroke-width="1"/><line x1="1151.5" y1="95" x2="1151.5" y2="625.5" stroke="#9a9a9a" stroke-width="1"/><line x1="1151.5" y1="601.5" x2="1157" y2="601.5" stroke="#9a9a9a" stroke-width="1"/><text x="1146.5500000000002" y="605.9" text-anchor="end" font-size="16" fill="#9a9a9a" letter-spacing="0.65">0</text><line x1="1151.5" y1="551.8" x2="1155" y2="551.8" stroke="#9a9a9a" stroke-width="1"/><text x="1146.5500000000002" y="556.1999999999999" text-anchor="end" font-size="16" fill="#9a9a9a" letter-spacing="0.65">20</text><line x1="1151.5" y1="502.1" x2="1155" y2="502.1" stroke="#9a9a9a" stroke-width="1"/><text x="1146.5500000000002" y="506.5" text-anchor="end" font-size="16" fill="#9a9a9a" letter-spacing="0.65">40</text><line x1="1151.5" y1="452.4" x2="1155" y2="452.4" stroke="#9a9a9a" stroke-width="1"/><text x="1146.5500000000002" y="456.79999999999995" text-anchor="end" font-size="16" fill="#9a9a9a" letter-spacing="0.65">60</text><line x1="1151.5" y1="402.70000000000005" x2="1155" y2="402.70000000000005" stroke="#9a9a9a" stroke-width="1"/><text x="1146.5500000000002" y="407.1" text-anchor="end" font-size="16" fill="#9a9a9a" letter-spacing="0.65">80</text><line x1="1151.5" y1="353.0" x2="1157" y2="353.0" stroke="#9a9a9a" stroke-width="1"/><text x="1146.5500000000002" y="357.4" text-anchor="end" font-size="16" fill="#9a9a9a" letter-spacing="0.65">100</text><line x1="1151.5" y1="303.3" x2="1155" y2="303.3" stroke="#9a9a9a" stroke-width="1"/><text x="1146.5500000000002" y="307.7" text-anchor="end" font-size="16" fill="#9a9a9a" letter-spacing="0.65">120</text><line x1="1151.5" y1="253.60000000000002" x2="1155" y2="253.60000000000002" stroke="#9a9a9a" stroke-width="1"/><text x="1146.5500000000002" y="258.0" text-anchor="end" font-size="16" fill="#9a9a9a" letter-spacing="0.65">140</text><line x1="1151.5" y1="203.90000000000003" x2="1155" y2="203.90000000000003" stroke="#9a9a9a" stroke-width="1"/><text x="1146.5500000000002" y="208.30000000000004" text-anchor="end" font-size="16" fill="#9a9a9a" letter-spacing="0.65">160</text><line x1="1151.5" y1="154.20000000000005" x2="1155" y2="154.20000000000005" stroke="#9a9a9a" stroke-width="1"/><text x="1146.5500000000002" y="158.60000000000005" text-anchor="end" font-size="16" fill="#9a9a9a" letter-spacing="0.65">180</text><line x1="1151.5" y1="104.5" x2="1157" y2="104.5" stroke="#9a9a9a" stroke-width="1"/><text x="1146.5500000000002" y="108.9" text-anchor="end" font-size="16" fill="#9a9a9a" letter-spacing="0.65">200</text><line x1="1151.5" y1="625.5" x2="1288" y2="625.5" stroke="#9a9a9a" stroke-width="1"/><line x1="1161.5" y1="620" x2="1161.5" y2="625.5" stroke="#9a9a9a" stroke-width="1"/><line x1="1175.86" y1="622" x2="1175.86" y2="625.5" stroke="#9a9a9a" stroke-width="1"/><line x1="1190.22" y1="622" x2="1190.22" y2="625.5" stroke="#9a9a9a" stroke-width="1"/><line x1="1204.58" y1="622" x2="1204.58" y2="625.5" stroke="#9a9a9a" stroke-width="1"/><line x1="1218.94" y1="622" x2="1218.94" y2="625.5" stroke="#9a9a9a" stroke-width="1"/><line x1="1233.3" y1="622" x2="1233.3" y2="625.5" stroke="#9a9a9a" stroke-width="1"/><line x1="1247.66" y1="622" x2="1247.66" y2="625.5" stroke="#9a9a9a" stroke-width="1"/><line x1="1262.02" y1="622" x2="1262.02" y2="625.5" stroke="#9a9a9a" stroke-width="1"/><line x1="1276.38" y1="622" x2="1276.38" y2="625.5" stroke="#9a9a9a" stroke-width="1"/><line x1="1290.74" y1="622" x2="1290.74" y2="625.5" stroke="#9a9a9a" stroke-width="1"/><text x="1161.3" y="638.5" text-anchor="middle" font-size="16" fill="#9a9a9a" letter-spacing="0.65">0</text><text x="1233.1" y="638.5" text-anchor="middle" font-size="16" fill="#9a9a9a" letter-spacing="0.65">100</text><line x1="432.5" y1="653" x2="432.5" y2="782.5" stroke="#9a9a9a" stroke-width="1"/><line x1="432.5" y1="779.38" x2="436" y2="779.38" stroke="#9a9a9a" stroke-width="1"/><line x1="432.5" y1="769.42" x2="436" y2="769.42" stroke="#9a9a9a" stroke-width="1"/><line x1="432.5" y1="759.46" x2="436" y2="759.46" stroke="#9a9a9a" stroke-width="1"/><line x1="432.5" y1="749.5" x2="438" y2="749.5" stroke="#9a9a9a" stroke-width="1"/><line x1="432.5" y1="739.54" x2="436" y2="739.54" stroke="#9a9a9a" stroke-width="1"/><line x1="432.5" y1="729.58" x2="436" y2="729.58" stroke="#9a9a9a" stroke-width="1"/><line x1="432.5" y1="719.62" x2="436" y2="719.62" stroke="#9a9a9a" stroke-width="1"/><line x1="432.5" y1="709.66" x2="436" y2="709.66" stroke="#9a9a9a" stroke-width="1"/><line x1="432.5" y1="699.7" x2="438" y2="699.7" stroke="#9a9a9a" stroke-width="1"/><line x1="432.5" y1="689.74" x2="436" y2="689.74" stroke="#9a9a9a" stroke-width="1"/><line x1="432.5" y1="679.78" x2="436" y2="679.78" stroke="#9a9a9a" stroke-width="1"/><line x1="432.5" y1="669.8199999999999" x2="436" y2="669.8199999999999" stroke="#9a9a9a" stroke-width="1"/><line x1="432.5" y1="659.86" x2="436" y2="659.86" stroke="#9a9a9a" stroke-width="1"/><text x="427.84999999999997" y="704.0" text-anchor="end" font-size="16" fill="#9a9a9a" letter-spacing="0.65">100</text><text x="427.84999999999997" y="753.8" text-anchor="end" font-size="16" fill="#9a9a9a" letter-spacing="0.65">0</text><line x1="432.5" y1="782.5" x2="1104" y2="782.5" stroke="#9a9a9a" stroke-width="1"/><line x1="447.3" y1="779" x2="447.3" y2="782.5" stroke="#9a9a9a" stroke-width="1"/><line x1="542.5" y1="777" x2="542.5" y2="782.5" stroke="#9a9a9a" stroke-width="1"/><line x1="637.7" y1="779" x2="637.7" y2="782.5" stroke="#9a9a9a" stroke-width="1"/><line x1="732.9" y1="779" x2="732.9" y2="782.5" stroke="#9a9a9a" stroke-width="1"/><line x1="828.0999999999999" y1="779" x2="828.0999999999999" y2="782.5" stroke="#9a9a9a" stroke-width="1"/><line x1="923.3" y1="779" x2="923.3" y2="782.5" stroke="#9a9a9a" stroke-width="1"/><line x1="1018.5" y1="779" x2="1018.5" y2="782.5" stroke="#9a9a9a" stroke-width="1"/><text x="446.8" y="795.8" text-anchor="middle" font-size="16" fill="#9a9a9a" letter-spacing="0.65">-100</text><text x="542.2" y="795.8" text-anchor="middle" font-size="16" fill="#9a9a9a" letter-spacing="0.65">0</text><text x="637.4000000000001" y="795.8" text-anchor="middle" font-size="16" fill="#9a9a9a" letter-spacing="0.65">100</text><text x="732.6" y="795.8" text-anchor="middle" font-size="16" fill="#9a9a9a" letter-spacing="0.65">200</text><text x="827.8" y="795.8" text-anchor="middle" font-size="16" fill="#9a9a9a" letter-spacing="0.65">300</text><text x="923.0" y="795.8" text-anchor="middle" font-size="16" fill="#9a9a9a" letter-spacing="0.65">400</text><text x="1018.2" y="795.8" text-anchor="middle" font-size="16" fill="#9a9a9a" letter-spacing="0.65">500</text><polygon points="541.5,750 541.5,733.1 542.1,735.6 551.0,735.6 560.5,734.6 570.1,733.6 584.3,732.1 593.9,730.6 600.5,728.6 606.2,726.1 609.1,725.1 622.4,725.1 636.7,724.6 651.0,722.6 660.5,720.6 667.2,718.1 673.5,715.1 675.7,712.1 676.3,674.8 677.3,674.8 678.1,702.2 680.5,708.7 683.3,709.3 693.8,708.2 708.1,702.2 722.4,693.2 732.9,687.2 733.4,686.8 735.7,693.2 738.6,699.7 742.4,712.1 744.3,722.1 746.2,726.1 749.0,726.1 750.9,720.6 752.8,710.7 755.7,700.7 759.5,695.7 764.0,691.7 774.7,696.7 789.0,700.7 803.3,704.7 812.8,706.7 817.1,706.7 818.1,699.7 818.5,665.8 819.8,665.8 820.2,702.2 822.0,713.1 827.1,716.6 836.6,721.6 855.7,723.6 869.9,724.6 889.0,725.1 895.6,727.6 904.2,731.8 922.3,733.1 950.9,735.1 979.4,737.0 1003.2,739.3 1004.6,736.6 1005.1,749.5 1005.1,750" fill="#9b9b9b"/></svg>
<div style="position:absolute;left:36px;top:697px;width:328px;height:94px;background:#fbfaf9"></div>
<svg style="position:absolute;left:0;top:0" width="1309" height="1011" viewBox="0 0 1309 1011"><rect x="37" y="698" width="326" height="92" fill="#000"/><rect x="55.5" y="700" width="291" height="59.5" fill="#000033"/><line x1="37" y1="699.5" x2="363" y2="699.5" stroke="#8c8c8c" stroke-width="1"/><line x1="132.5" y1="700" x2="132.5" y2="706" stroke="#8c8c8c" stroke-width="1"/><line x1="208.5" y1="700" x2="208.5" y2="706" stroke="#8c8c8c" stroke-width="1"/><line x1="285.5" y1="700" x2="285.5" y2="706" stroke="#8c8c8c" stroke-width="1"/><line x1="361.5" y1="700" x2="361.5" y2="706" stroke="#8c8c8c" stroke-width="1"/><polygon points="56,753.5 56,753 61,753 61.5,749 62.5,749 63,752 66,752 67,751 70,752 72,750 74,750 76,751 78.5,750 79,749 80.8,745.7 84.8,729.8 86.5,727 87.7,723.3 89.7,713.9 92.7,706.4 95.2,705 97,707 98.7,707.4 100,713 101.6,718.9 103,716 105.6,712.9 107,711 109.6,710.4 111.5,716 113.6,723.8 116.5,734.7 118,734 120.5,724.3 121,737 122,735 123.5,726.3 124,731 126.5,729.3 128.5,732.8 130.4,737.2 132,738 134.4,742.7 136,741 137.4,744.2 141.4,749.6 145,749.5 149.3,750.6 155,751.5 165.2,752.6 166,753.5" fill="#aaaae2"/><polygon points="108,753.5 108,714 110,716 112.5,727 115.5,735.2 122,740 129.4,744.7 134,747 139.4,750.6 150,752 159.2,753.1 160,753.5" fill="#5252d4"/><rect x="89.7" y="736" width="1.1" height="17.5" fill="#5252d4"/><rect x="93.7" y="731" width="1.1" height="22.5" fill="#5252d4"/><rect x="95.7" y="733" width="1.1" height="20.5" fill="#5252d4"/><rect x="98.7" y="731" width="1.1" height="22.5" fill="#5252d4"/><rect x="101.6" y="724" width="1.1" height="29.5" fill="#5252d4"/><rect x="103.6" y="737" width="1.1" height="16.5" fill="#5252d4"/><rect x="105.6" y="720" width="1.1" height="33.5" fill="#5252d4"/><line x1="56" y1="753.5" x2="305" y2="753.5" stroke="#9c9ce0" stroke-width="1"/><defs><linearGradient id="therm" x1="0" x2="1" y1="0" y2="0"><stop offset="0" stop-color="#000000"/><stop offset="0.333" stop-color="#b00000"/><stop offset="0.5" stop-color="#e06a00"/><stop offset="0.667" stop-color="#ffdd00"/><stop offset="1" stop-color="#ffffff"/></linearGradient></defs><rect x="47" y="760" width="305" height="14" fill="url(#therm)"/><path d="M55.5 700 L55.5 759.5 M55.5 729 L46.5 759 L46.5 775" fill="none" stroke="#d8c83a" stroke-width="1"/><path d="M346.5 700 L346.5 759.5 M346.5 729 L353.5 756 L353.5 775" fill="none" stroke="#d8c83a" stroke-width="1"/><path d="M45.5 774.5 L54.0 789 L37.0 789 Z" fill="#000" stroke="#e8e8e8" stroke-width="1"/><path d="M147.5 774.5 L156.0 789 L139.0 789 Z" fill="#c00000" stroke="#e8e8e8" stroke-width="1"/><path d="M250 774.5 L258.5 789 L241.5 789 Z" fill="#ffd200" stroke="#e8e8e8" stroke-width="1"/><path d="M352.5 774.5 L361.0 789 L344.0 789 Z" fill="#ffffff" stroke="#e8e8e8" stroke-width="1"/></svg>
<div style="position:absolute;left:1106px;top:719px;width:1px;height:1px;background:#a8a5a1"></div>
<div style="position:absolute;left:1106px;top:722px;width:1px;height:1px;background:#a8a5a1"></div>
<div style="position:absolute;left:1106px;top:725px;width:1px;height:1px;background:#a8a5a1"></div>
<div style="position:absolute;left:1106px;top:728px;width:1px;height:1px;background:#a8a5a1"></div>
<div style="position:absolute;left:1106px;top:731px;width:1px;height:1px;background:#a8a5a1"></div>
<div style="position:absolute;left:1106px;top:734px;width:1px;height:1px;background:#a8a5a1"></div>
<div style="position:absolute;left:1109px;top:719px;width:1px;height:1px;background:#a8a5a1"></div>
<div style="position:absolute;left:1109px;top:722px;width:1px;height:1px;background:#a8a5a1"></div>
<div style="position:absolute;left:1109px;top:725px;width:1px;height:1px;background:#a8a5a1"></div>
<div style="position:absolute;left:1109px;top:728px;width:1px;height:1px;background:#a8a5a1"></div>
<div style="position:absolute;left:1109px;top:731px;width:1px;height:1px;background:#a8a5a1"></div>
<div style="position:absolute;left:1109px;top:734px;width:1px;height:1px;background:#a8a5a1"></div>
<div style="position:absolute;left:1106px;top:362px;width:1px;height:1px;background:#a8a5a1"></div>
<div style="position:absolute;left:1106px;top:365px;width:1px;height:1px;background:#a8a5a1"></div>
<div style="position:absolute;left:1106px;top:368px;width:1px;height:1px;background:#a8a5a1"></div>
<div style="position:absolute;left:1106px;top:371px;width:1px;height:1px;background:#a8a5a1"></div>
<div style="position:absolute;left:1106px;top:374px;width:1px;height:1px;background:#a8a5a1"></div>
<div style="position:absolute;left:1106px;top:377px;width:1px;height:1px;background:#a8a5a1"></div>
<div style="position:absolute;left:1109px;top:362px;width:1px;height:1px;background:#a8a5a1"></div>
<div style="position:absolute;left:1109px;top:365px;width:1px;height:1px;background:#a8a5a1"></div>
<div style="position:absolute;left:1109px;top:368px;width:1px;height:1px;background:#a8a5a1"></div>
<div style="position:absolute;left:1109px;top:371px;width:1px;height:1px;background:#a8a5a1"></div>
<div style="position:absolute;left:1109px;top:374px;width:1px;height:1px;background:#a8a5a1"></div>
<div style="position:absolute;left:1109px;top:377px;width:1px;height:1px;background:#a8a5a1"></div>
<div style="position:absolute;left:834px;top:647px;width:1px;height:1px;background:#a8a5a1"></div>
<div style="position:absolute;left:834px;top:650px;width:1px;height:1px;background:#a8a5a1"></div>
<div style="position:absolute;left:837px;top:647px;width:1px;height:1px;background:#a8a5a1"></div>
<div style="position:absolute;left:837px;top:650px;width:1px;height:1px;background:#a8a5a1"></div>
<div style="position:absolute;left:840px;top:647px;width:1px;height:1px;background:#a8a5a1"></div>
<div style="position:absolute;left:840px;top:650px;width:1px;height:1px;background:#a8a5a1"></div>
<div style="position:absolute;left:843px;top:647px;width:1px;height:1px;background:#a8a5a1"></div>
<div style="position:absolute;left:843px;top:650px;width:1px;height:1px;background:#a8a5a1"></div>
<div style="position:absolute;left:846px;top:647px;width:1px;height:1px;background:#a8a5a1"></div>
<div style="position:absolute;left:846px;top:650px;width:1px;height:1px;background:#a8a5a1"></div>
<div style="position:absolute;left:849px;top:647px;width:1px;height:1px;background:#a8a5a1"></div>
<div style="position:absolute;left:849px;top:650px;width:1px;height:1px;background:#a8a5a1"></div>
<div style="position:absolute;left:834px;top:803px;width:1px;height:1px;background:#a8a5a1"></div>
<div style="position:absolute;left:834px;top:806px;width:1px;height:1px;background:#a8a5a1"></div>
<div style="position:absolute;left:837px;top:803px;width:1px;height:1px;background:#a8a5a1"></div>
<div style="position:absolute;left:837px;top:806px;width:1px;height:1px;background:#a8a5a1"></div>
<div style="position:absolute;left:840px;top:803px;width:1px;height:1px;background:#a8a5a1"></div>
<div style="position:absolute;left:840px;top:806px;width:1px;height:1px;background:#a8a5a1"></div>
<div style="position:absolute;left:843px;top:803px;width:1px;height:1px;background:#a8a5a1"></div>
<div style="position:absolute;left:843px;top:806px;width:1px;height:1px;background:#a8a5a1"></div>
<div style="position:absolute;left:846px;top:803px;width:1px;height:1px;background:#a8a5a1"></div>
<div style="position:absolute;left:846px;top:806px;width:1px;height:1px;background:#a8a5a1"></div>
<div style="position:absolute;left:849px;top:803px;width:1px;height:1px;background:#a8a5a1"></div>
<div style="position:absolute;left:849px;top:806px;width:1px;height:1px;background:#a8a5a1"></div>
<div style="position:absolute;left:507.7px;top:12.5px;font-size:16px;line-height:16px;font-weight:bold;color:#141414;white-space:pre;letter-spacing:1.073px;-webkit-text-stroke:0.35px #141414;">laVue: Live Image Viewer (v1.21.2)</div>
<div style="position:absolute;left:19.7px;top:62.5px;font-size:16px;line-height:16px;font-weight:bold;color:#141414;white-space:pre;letter-spacing:1.024px;-webkit-text-stroke:0.35px #141414;">Image Source</div>
<div style="position:absolute;left:36.7px;top:90.5px;font-size:16px;line-height:16px;font-weight:normal;color:#141414;white-space:pre;letter-spacing:0.227px;">Source:</div>
<div style="position:absolute;left:106.3px;top:90.5px;font-size:16px;line-height:16px;font-weight:bold;color:#141414;white-space:pre;letter-spacing:1.173px;-webkit-text-stroke:0.35px #141414;">Hidra</div>
<div style="position:absolute;left:36.7px;top:124.5px;font-size:16px;line-height:16px;font-weight:normal;color:#141414;white-space:pre;letter-spacing:0.470px;">Server:</div>
<div style="position:absolute;left:106.3px;top:124.5px;font-size:16px;line-height:16px;font-weight:normal;color:#141414;white-space:pre;letter-spacing:0.428px;">haso228jk.desy.de</div>
<div style="position:absolute;left:36.7px;top:153.5px;font-size:16px;line-height:16px;font-weight:normal;color:#141414;white-space:pre;letter-spacing:0.473px;">Client:</div>
<div style="position:absolute;left:100.2px;top:153.5px;font-size:16px;line-height:16px;font-weight:normal;color:#141414;white-space:pre;letter-spacing:0.446px;">haso228jk.desy.de:53001</div>
<div style="position:absolute;left:36.7px;top:182.5px;font-size:16px;line-height:16px;font-weight:normal;color:#141414;white-space:pre;letter-spacing:0.448px;">Status:</div>
<div style="position:absolute;left:105.1px;top:182.5px;font-size:16px;line-height:16px;font-weight:normal;color:#1a1adb;white-space:pre;letter-spacing:0.493px;">Not connected</div>
<div style="position:absolute;left:213.0px;top:216.5px;font-size:16px;line-height:16px;font-weight:normal;color:#141414;white-space:pre;letter-spacing:0.876px;">Start</div>
<div style="position:absolute;left:19.7px;top:252.5px;font-size:16px;line-height:16px;font-weight:bold;color:#141414;white-space:pre;letter-spacing:1.181px;-webkit-text-stroke:0.35px #141414;">Image preparation</div>
<div style="position:absolute;left:69.4px;top:288.5px;font-size:16px;line-height:16px;font-weight:normal;color:#a3a3a3;white-space:pre;letter-spacing:0.552px;">Subtract bkg</div>
<div style="position:absolute;left:246.0px;top:289.5px;font-size:16px;line-height:16px;font-weight:normal;color:#141414;white-space:pre;letter-spacing:0.350px;">Select ...</div>
<div style="position:absolute;left:46.1px;top:318.5px;font-size:16px;line-height:16px;font-weight:normal;color:#141414;white-space:pre;letter-spacing:0.515px;">Background image:</div>
<div style="position:absolute;left:203.2px;top:318.5px;font-size:16px;line-height:16px;font-weight:normal;color:#141414;white-space:pre;letter-spacing:0.515px;">no image selected</div>
<div style="position:absolute;left:69.4px;top:364.5px;font-size:16px;line-height:16px;font-weight:normal;color:#a3a3a3;white-space:pre;letter-spacing:0.511px;">Apply mask</div>
<div style="position:absolute;left:246.0px;top:365.5px;font-size:16px;line-height:16px;font-weight:normal;color:#141414;white-space:pre;letter-spacing:0.350px;">Select ...</div>
<div style="position:absolute;left:46.1px;top:394.5px;font-size:16px;line-height:16px;font-weight:normal;color:#141414;white-space:pre;letter-spacing:0.410px;">Mask image:</div>
<div style="position:absolute;left:203.2px;top:394.5px;font-size:16px;line-height:16px;font-weight:normal;color:#141414;white-space:pre;letter-spacing:0.515px;">no image selected</div>
<div style="position:absolute;left:46.1px;top:450.5px;font-size:16px;line-height:16px;font-weight:normal;color:#141414;white-space:pre;letter-spacing:0.446px;">Transformation:</div>
<div style="position:absolute;left:183.0px;top:450.5px;font-size:16px;line-height:16px;font-weight:normal;color:#141414;white-space:pre;letter-spacing:0.569px;">none</div>
<div style="position:absolute;left:46.1px;top:479.5px;font-size:16px;line-height:16px;font-weight:normal;color:#f01212;white-space:pre;letter-spacing:0.418px;">Keep original coordinates! (X-horizontal)</div>
<div style="position:absolute;left:19.7px;top:519.5px;font-size:16px;line-height:16px;font-weight:bold;color:#141414;white-space:pre;letter-spacing:0.885px;-webkit-text-stroke:0.35px #141414;">Intensity display scaling</div>
<div style="position:absolute;left:60.7px;top:544.5px;font-size:16px;line-height:16px;font-weight:normal;color:#141414;white-space:pre;letter-spacing:1.143px;">sqrt</div>
<div style="position:absolute;left:172.2px;top:544.5px;font-size:16px;line-height:16px;font-weight:normal;color:#141414;white-space:pre;letter-spacing:0.692px;">linear</div>
<div style="position:absolute;left:282.3px;top:544.5px;font-size:16px;line-height:16px;font-weight:normal;color:#141414;white-space:pre;letter-spacing:0.520px;">log</div>
<div style="position:absolute;left:19.7px;top:578.5px;font-size:16px;line-height:16px;font-weight:bold;color:#141414;white-space:pre;letter-spacing:0.783px;-webkit-text-stroke:0.35px #141414;">Display levels and colors</div>
<div style="position:absolute;left:37.0px;top:603.5px;font-size:16px;line-height:16px;font-weight:normal;color:#f01212;white-space:pre;letter-spacing:0.558px;">sqrt scale!</div>
<div style="position:absolute;left:191.2px;top:603.5px;font-size:16px;line-height:16px;font-weight:normal;color:#141414;white-space:pre;letter-spacing:0.580px;">Automatic levels</div>
<div style="position:absolute;left:37.0px;top:635.5px;font-size:16px;line-height:16px;font-weight:normal;color:#141414;white-space:pre;letter-spacing:0.651px;">Minimum value:</div>
<div style="position:absolute;left:174.1px;top:635.5px;font-size:16px;line-height:16px;font-weight:normal;color:#8e8e8e;white-space:pre;letter-spacing:0.753px;">0.00</div>
<div style="position:absolute;left:37.0px;top:669.5px;font-size:16px;line-height:16px;font-weight:normal;color:#141414;white-space:pre;letter-spacing:0.632px;">Maximum value:</div>
<div style="position:absolute;left:174.1px;top:669.5px;font-size:16px;line-height:16px;font-weight:normal;color:#8e8e8e;white-space:pre;letter-spacing:0.713px;">38.04</div>
<div style="position:absolute;left:37.0px;top:801.5px;font-size:16px;line-height:16px;font-weight:normal;color:#141414;white-space:pre;letter-spacing:0.546px;">Color gradient:</div>
<div style="position:absolute;left:208.9px;top:801.5px;font-size:16px;line-height:16px;font-weight:normal;color:#141414;white-space:pre;letter-spacing:1.007px;">thermal</div>
<div style="position:absolute;left:19.7px;top:837.5px;font-size:16px;line-height:16px;font-weight:bold;color:#141414;white-space:pre;letter-spacing:1.016px;-webkit-text-stroke:0.35px #141414;">Image statistics</div>
<div style="position:absolute;left:37.0px;top:860.5px;font-size:16px;line-height:16px;font-weight:normal;color:#141414;white-space:pre;letter-spacing:0.368px;">Scaling:</div>
<div style="position:absolute;left:121.9px;top:860.5px;font-size:16px;line-height:16px;font-weight:normal;color:#f01212;white-space:pre;letter-spacing:0.732px;">linear</div>
<div style="position:absolute;left:37.0px;top:889.5px;font-size:16px;line-height:16px;font-weight:normal;color:#141414;white-space:pre;letter-spacing:0.717px;">Maximum:</div>
<div style="position:absolute;left:127.4px;top:889.5px;font-size:16px;line-height:16px;font-weight:normal;color:#141414;white-space:pre;letter-spacing:0.632px;">1447.0000</div>
<div style="position:absolute;left:37.0px;top:923.5px;font-size:16px;line-height:16px;font-weight:normal;color:#141414;white-space:pre;letter-spacing:0.333px;">Mean:</div>
<div style="position:absolute;left:127.4px;top:923.5px;font-size:16px;line-height:16px;font-weight:normal;color:#141414;white-space:pre;letter-spacing:0.593px;">54.7005</div>
<div style="position:absolute;left:37.0px;top:957.5px;font-size:16px;line-height:16px;font-weight:normal;color:#141414;white-space:pre;letter-spacing:0.399px;">Variance:</div>
<div style="position:absolute;left:127.4px;top:957.5px;font-size:16px;line-height:16px;font-weight:normal;color:#141414;white-space:pre;letter-spacing:0.632px;">1753.0483</div>
<div style="position:absolute;left:395.3px;top:65.5px;font-size:16px;line-height:16px;font-weight:normal;color:#141414;white-space:pre;letter-spacing:0.453px;">Image/File name:</div>
<div style="position:absolute;left:541.5px;top:65.5px;font-size:16px;line-height:16px;font-weight:normal;color:#141414;white-space:pre;letter-spacing:0.559px;">/home/jkotan/scratch/files/tst_05717_00000.cbf</div>
<div style="position:absolute;left:1127.7px;top:65.5px;font-size:16px;line-height:16px;font-weight:normal;color:#141414;white-space:pre;letter-spacing:0.361px;">Load ...</div>
<div style="position:absolute;left:1229.2px;top:65.5px;font-size:16px;line-height:16px;font-weight:normal;color:#141414;white-space:pre;letter-spacing:1.752px;">Quit</div>
<div style="position:absolute;left:405.2px;top:823.5px;font-size:16px;line-height:16px;font-weight:normal;color:#141414;white-space:pre;letter-spacing:0.214px;">Projections - Row slice:</div>
<div style="position:absolute;left:751.6px;top:823.5px;font-size:16px;line-height:16px;font-weight:normal;color:#141414;white-space:pre;letter-spacing:0.481px;">Column slice:</div>
<div style="position:absolute;left:864.1px;top:823.5px;font-size:16px;line-height:16px;font-weight:normal;color:#141414;white-space:pre;letter-spacing:0.709px;">215:220</div>
<div style="position:absolute;left:1133.5px;top:823.5px;font-size:16px;line-height:16px;font-weight:normal;color:#141414;white-space:pre;letter-spacing:0.653px;">Mapping:</div>
<div style="position:absolute;left:1215.5px;top:823.5px;font-size:16px;line-height:16px;font-weight:normal;color:#141414;white-space:pre;letter-spacing:1.056px;">mean</div>
<div style="position:absolute;left:405.2px;top:857.5px;font-size:16px;line-height:16px;font-weight:normal;color:#141414;white-space:pre;letter-spacing:0.162px;">ROI alias(es):</div>
<div style="position:absolute;left:520.7px;top:857.5px;font-size:16px;line-height:16px;font-weight:normal;color:#141414;white-space:pre;letter-spacing:0.719px;">pilatusroi</div>
<div style="position:absolute;left:1043.2px;top:857.5px;font-size:16px;line-height:16px;font-weight:normal;color:#141414;white-space:pre;letter-spacing:0.000px;">2</div>
<div style="position:absolute;left:1131.7px;top:857.5px;font-size:16px;line-height:16px;font-weight:normal;color:#141414;white-space:pre;letter-spacing:1.066px;">Add</div>
<div style="position:absolute;left:1217.3px;top:857.5px;font-size:16px;line-height:16px;font-weight:normal;color:#141414;white-space:pre;letter-spacing:0.046px;">Fetch</div>
<div style="position:absolute;left:405.2px;top:891.5px;font-size:16px;line-height:16px;font-weight:normal;color:#141414;white-space:pre;letter-spacing:0.647px;">[x1, y1, x2, y2], sum:</div>
<div style="position:absolute;left:581.5px;top:891.5px;font-size:16px;line-height:16px;font-weight:normal;color:#141414;white-space:pre;letter-spacing:0.640px;">[235, 30, 314, 84], pilatusroi [1]; values = 334142 / 78104</div>
<div style="position:absolute;left:405.2px;top:925.5px;font-size:16px;line-height:16px;font-weight:normal;color:#141414;white-space:pre;letter-spacing:0.479px;">Pixel position and intensity:</div>
<div style="position:absolute;left:1083.0px;top:925.5px;font-size:16px;line-height:16px;font-weight:normal;color:#141414;white-space:pre;letter-spacing:0.543px;">Geometry ...</div>
<div style="position:absolute;left:1198.0px;top:925.5px;font-size:16px;line-height:16px;font-weight:normal;color:#141414;white-space:pre;letter-spacing:0.489px;">angles</div>
<div style="position:absolute;left:410.1px;top:959.5px;font-size:16px;line-height:16px;font-weight:normal;color:#141414;white-space:pre;letter-spacing:0.645px;">th_x = 14.727154 deg, th_y = -3.346146 deg, th_tot = 15.070898 deg, intensity = 20.00</div>
<div style="position:absolute;left:1155.0px;top:959.5px;font-size:16px;line-height:16px;font-weight:bold;color:#141414;white-space:pre;letter-spacing:1.200px;-webkit-text-stroke:0.35px #141414;">Q+ROI+Proj</div>
</body></html>
